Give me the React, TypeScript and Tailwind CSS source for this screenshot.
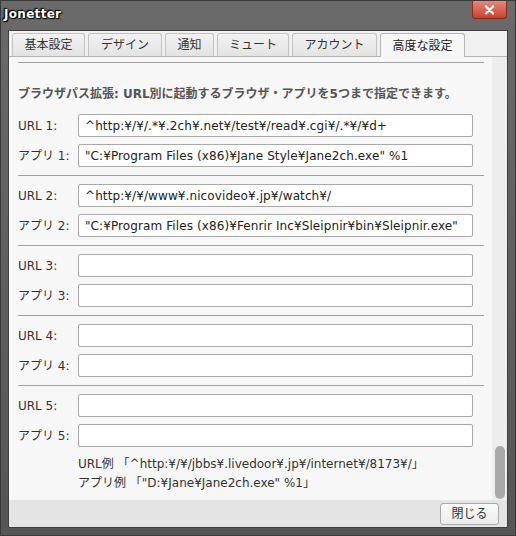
import React from "react";

const font = "font-['DejaVu_Sans','Noto_Sans_CJK_JP',sans-serif]";

const tabs = [
  { label: "基本設定", w: "w-[73px]" },
  { label: "デザイン", w: "w-[74px]" },
  { label: "通知", w: "w-[49px]" },
  { label: "ミュート", w: "w-[72px]" },
  { label: "アカウント", w: "w-[85px]" },
  { label: "高度な設定", w: "w-[85px]", active: true },
];

const rows = [
  { url: "^http:¥/¥/.*¥.2ch¥.net¥/test¥/read¥.cgi¥/.*¥/¥d+", app: "\"C:¥Program Files (x86)¥Jane Style¥Jane2ch.exe\" %1" },
  { url: "^http:¥/¥/www¥.nicovideo¥.jp¥/watch¥/", app: "\"C:¥Program Files (x86)¥Fenrir Inc¥Sleipnir¥bin¥Sleipnir.exe\"" },
  { url: "", app: "" },
  { url: "", app: "" },
  { url: "", app: "" },
];

function Field({ label, value }: { label: string; value: string }) {
  return (
    <div className="flex items-center h-[23px]">
      <span className="w-[60px] shrink-0 text-[12px] text-[#333]">{label}</span>
      <div className="w-[395px] h-[23px] bg-white border border-[#a9a9a9] rounded-[2px] px-[6px] flex items-center text-[12px] tracking-[0.1px] text-[#222] whitespace-nowrap overflow-hidden">
        {value}
      </div>
    </div>
  );
}

export default function App() {
  return (
    <div className={`w-[516px] h-[536px] bg-gradient-to-b from-[#6a6a6a] to-[#555] border border-[#3a3a3a] flex flex-col relative ${font}`}>
      {/* title bar */}
      <div className="h-[29px] shrink-0 flex items-start pt-[4px] pl-[3px]">
        <span
          className="text-white font-bold text-[12px] tracking-[0.3px]"
          style={{ textShadow: "0 0 2px #000, 0 0 2px #000, 1px 1px 1px #000, -1px -1px 1px #000" }}
        >
          Jonetter
        </span>
      </div>
      <div className="absolute right-[8px] top-0 w-[35px] h-[18px] rounded-b-[4px] bg-gradient-to-b from-[#e8877a] to-[#c8402c] border border-[#8a2a1c] border-t-0 flex items-center justify-center">
        <svg width="11" height="10" viewBox="0 0 11 10">
          <path d="M2 1.5L9 8.5M9 1.5L2 8.5" stroke="#fff" strokeWidth="2.4" strokeLinecap="round" />
        </svg>
      </div>

      {/* client */}
      <div className="mx-[7px] mb-[7px] flex-1 bg-[#f0f0f0] flex flex-col border border-[#3f3f3f]">
        {/* tabs */}
        <div className="flex items-end gap-[3px] pl-[3px] pt-[2px] h-[25px] shrink-0">
          {tabs.map((t) =>
            t.active ? (
              <div
                key={t.label}
                className={`${t.w} h-[24px] bg-[#f7f7f7] border border-b-0 border-[#b5b5b5] rounded-t-[3px] flex items-center justify-center text-[12px] text-[#222] relative top-[1px]`}
              >
                {t.label}
              </div>
            ) : (
              <div
                key={t.label}
                className={`${t.w} h-[23px] bg-gradient-to-b from-[#f2f2f2] to-[#e3e3e3] border border-b-0 border-[#c2c2c2] rounded-t-[3px] flex items-center justify-center text-[12px] text-[#333]`}
              >
                {t.label}
              </div>
            )
          )}
        </div>

        {/* panel */}
        <div className="flex-1 flex border-t border-[#b5b5b5] bg-[#f7f7f7] min-h-0">
          <div className="flex-1 flex flex-col pl-[9px] pt-[5px]">
            <div className="w-[466px] h-px bg-[#a0a0a0]" />
            <div className="mt-[23px] text-[12px] font-bold text-[#555] leading-[16px]">
              ブラウザパス拡張: URL別に起動するブラウザ・アプリを5つまで指定できます。
            </div>
            <div className="mt-[12px] flex flex-col">
              {rows.map((r, i) => (
                <div key={i} className="flex flex-col">
                  {i > 0 && <div className="w-[466px] h-px bg-[#a0a0a0] my-[8px]" />}
                  <div className="flex flex-col gap-[7px]">
                    <Field label={`URL ${i + 1}:`} value={r.url} />
                    <Field label={`アプリ ${i + 1}:`} value={r.app} />
                  </div>
                </div>
              ))}
            </div>
            <div className="pl-[60px] mt-[8px] text-[12px] text-[#333] leading-[19px]">
              <div>URL例 「^http:¥/¥/jbbs¥.livedoor¥.jp¥/internet¥/8173¥/」</div>
              <div>アプリ例 「"D:¥Jane¥Jane2ch.exe" %1」</div>
            </div>
          </div>
          {/* scrollbar */}
          <div className="w-[15px] bg-[#ededed] flex flex-col justify-end items-center pb-[1px]">
            <div className="w-[10px] h-[53px] rounded-[5px] bg-[#a9a9a9]" />
          </div>
        </div>

        {/* bottom bar */}
        <div className="h-[27px] shrink-0 bg-[#e4e4e4] flex items-center justify-end pr-[8px]">
          <button className="w-[59px] h-[22px] rounded-[3px] border border-[#a9a9a9] bg-gradient-to-b from-[#fbfbfb] to-[#ececec] text-[12px] text-[#333] flex items-center justify-center">
            閉じる
          </button>
        </div>
      </div>
    </div>
  );
}
